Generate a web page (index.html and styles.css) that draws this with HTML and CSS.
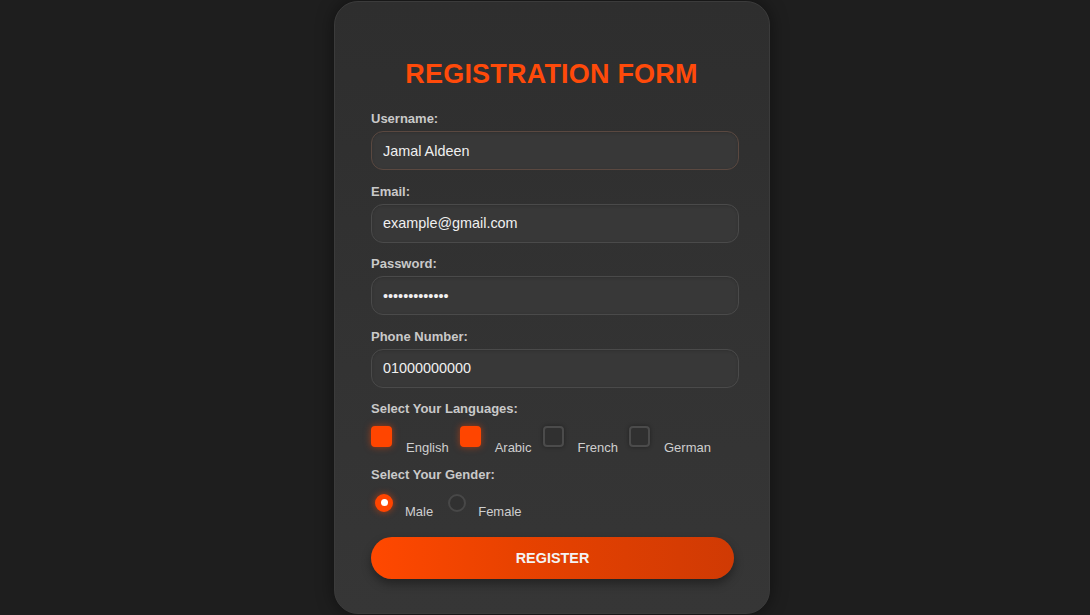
FILE: index.html
```html
<!DOCTYPE html>
<html lang="en">
<head>
<meta charset="utf-8">
<title>Registration Form</title>
<link rel="stylesheet" href="styles.css">
</head>
<body>
<form class="card">
  <h2 class="title">REGISTRATION FORM</h2>

  <div class="group">
    <label class="label" for="username">Username:</label>
    <input class="field field-focus" id="username" type="text" value="Jamal Aldeen">
  </div>
  <div class="group">
    <label class="label" for="email">Email:</label>
    <input class="field" id="email" type="email" value="example@gmail.com">
  </div>
  <div class="group">
    <label class="label" for="password">Password:</label>
    <input class="field" id="password" type="password" value="jamalaldeen12">
  </div>
  <div class="group">
    <label class="label" for="phone">Phone Number:</label>
    <input class="field" id="phone" type="tel" value="01000000000">
  </div>

  <div class="group group-langs">
    <span class="label">Select Your Languages:</span>
    <div class="options">
      <label class="opt"><span class="box checked"></span><span class="opt-text">English</span></label>
      <label class="opt"><span class="box checked"></span><span class="opt-text">Arabic</span></label>
      <label class="opt"><span class="box"></span><span class="opt-text">French</span></label>
      <label class="opt"><span class="box"></span><span class="opt-text">German</span></label>
    </div>
  </div>

  <div class="group group-gender">
    <span class="label">Select Your Gender:</span>
    <div class="options radios">
      <label class="ropt"><span class="radio on"></span><span class="ropt-text">Male</span></label>
      <label class="ropt"><span class="radio"></span><span class="ropt-text">Female</span></label>
    </div>
  </div>

  <button class="btn" type="button">REGISTER</button>
</form>
</body>
</html>
```

FILE: styles.css
```css
* { box-sizing: border-box; }

html, body {
  margin: 0;
  padding: 0;
  height: 100%;
  overflow: hidden;
}

body {
  background: #1e1e1e;
  font-family: "Liberation Sans", Arial, sans-serif;
  color: #e8e8e8;
}

.card {
  width: 436px;
  height: 613px;
  margin: 1px 0 0 334px;
  padding: 56px 30px 0 36px;
  background: linear-gradient(180deg, #2e2e2e 0%, #333333 60%, #363636 100%);
  border: 1px solid #3b3b3b;
  border-radius: 24px;
  box-shadow: 0 0 18px rgba(0, 0, 0, 0.45);
}

.title {
  margin: 0 0 21px;
  padding-right: 7px;
  font-size: 27px;
  line-height: 32px;
  font-weight: 700;
  color: #ff4a0a;
  text-align: center;
  letter-spacing: 0.2px;
}

.group {
  margin-bottom: 13.6px;
}

.label {
  display: block;
  font-size: 13px;
  line-height: 15px;
  font-weight: 700;
  color: #c9c9c9;
  margin-bottom: 5px;
}

.field {
  display: block;
  width: 100%;
  height: 39px;
  padding: 0 11px;
  background: #383838;
  border: 1px solid #4a4a4a;
  border-radius: 12px;
  color: #f0f0f0;
  font-family: "Liberation Sans", Arial, sans-serif;
  font-size: 14.4px;
  outline: none;
  box-shadow: inset 0 1px 3px rgba(0, 0, 0, 0.15);
}

.field-focus {
  border-color: #5a4840;
}

.group-langs {
  margin-bottom: 11.5px;
}

.options {
  display: flex;
  align-items: flex-start;
  margin-top: 10px;
}

.opt {
  display: flex;
  align-items: flex-start;
  margin-right: 11px;
}

.box {
  width: 21px;
  height: 21px;
  border-radius: 4px;
  border: 2px solid #4b4b4b;
  background: #303030;
  box-shadow: 0 0 4px rgba(0, 0, 0, 0.35);
  margin-right: 14px;
  flex: none;
}

.box.checked {
  background: #ff4500;
  border-color: #ff4500;
  box-shadow: 0 0 7px rgba(255, 69, 0, 0.55);
}

.opt-text {
  font-size: 13px;
  line-height: 15px;
  color: #cfcfcf;
  margin-top: 14px;
}

.group-gender .label {
  margin-bottom: 12px;
}

.radios {
  margin-top: 0;
  padding-left: 4px;
}

.ropt {
  display: flex;
  align-items: flex-start;
  margin-right: 15px;
}

.radio {
  width: 18px;
  height: 18px;
  border-radius: 50%;
  border: 2px solid #484848;
  background: #313131;
  margin-right: 12px;
  flex: none;
  position: relative;
}

.radio.on {
  background: #ff4500;
  border-color: #ff4500;
  box-shadow: 0 0 7px rgba(255, 69, 0, 0.6);
}

.radio.on::after {
  content: "";
  position: absolute;
  left: 3.5px;
  top: 3.5px;
  width: 7px;
  height: 7px;
  border-radius: 50%;
  background: #ffffff;
}

.ropt-text {
  font-size: 13px;
  line-height: 15px;
  color: #cfcfcf;
  margin-top: 10px;
}

.btn {
  display: block;
  width: 363px;
  height: 42px;
  margin-top: 18px;
  border: none;
  border-radius: 21px;
  background: linear-gradient(90deg, #ff4800 0%, #e84200 40%, #d03a04 100%);
  color: #f4f4f4;
  font-family: "Liberation Sans", Arial, sans-serif;
  font-size: 14.4px;
  font-weight: 700;
  letter-spacing: 0;
  box-shadow: 0 5px 10px rgba(0, 0, 0, 0.35);
}
```
